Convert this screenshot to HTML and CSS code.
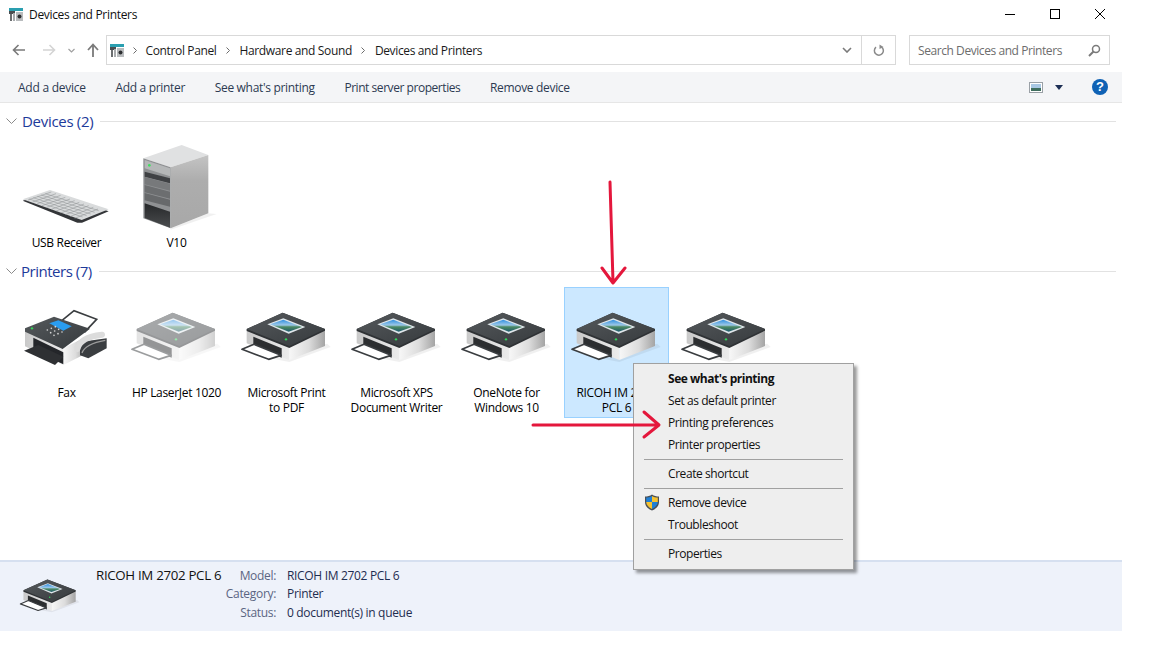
FILE: index.html
```html
<!DOCTYPE html>
<html lang="en">
<head>
<meta charset="utf-8">
<title>Devices and Printers</title>
<link rel="stylesheet" href="styles.css">
</head>
<body>
<svg class="defs" width="0" height="0" aria-hidden="true">
  <defs>
    <linearGradient id="sideR" x1="0" x2="1" y1="0" y2="0">
      <stop offset="0" stop-color="#f7f7f7"/><stop offset=".55" stop-color="#dcdcdc"/><stop offset="1" stop-color="#a4a4a4"/>
    </linearGradient>
    <linearGradient id="sideL" x1="0" x2="1" y1="0" y2="0">
      <stop offset="0" stop-color="#c9c9c9"/><stop offset="1" stop-color="#ececec"/>
    </linearGradient>
    <linearGradient id="topDark" x1="0" x2="1" y1="0" y2="1">
      <stop offset="0" stop-color="#55595c"/><stop offset="1" stop-color="#363a3d"/>
    </linearGradient>
    <linearGradient id="srvR" x1="0" x2="0" y1="0" y2="1">
      <stop offset="0" stop-color="#c4c4c4"/><stop offset=".35" stop-color="#adadad"/><stop offset="1" stop-color="#a8a8a8"/>
    </linearGradient>
    <linearGradient id="srvB" x1="0" x2="0" y1="0" y2="1">
      <stop offset="0" stop-color="#26282a"/><stop offset="1" stop-color="#4a4c4e"/>
    </linearGradient>
    <linearGradient id="photo" x1="0" x2="0" y1="0" y2="1">
      <stop offset="0" stop-color="#2f8fe0"/><stop offset=".45" stop-color="#9cc7e8"/><stop offset=".6" stop-color="#4c8a63"/><stop offset="1" stop-color="#1f5a6e"/>
    </linearGradient>
    <symbol id="printer" viewBox="0 0 315 294">
      <polygon points="60,205 166,225 290,180 280,170" fill="#000" opacity=".06"/>
      <polygon points="38,126 166,177 166,219 38,169" fill="url(#sideL)"/>
      <polygon points="166,177 273,126 273,177 166,219" fill="url(#sideR)"/>
      <polygon points="38,126 146,77 273,126 273,131 166,183 38,132" fill="#2f3235"/>
      <polygon points="38,126 146,77 273,126 166,177" fill="url(#topDark)"/>
      <polygon points="58,149 143,184 143,212 58,176" fill="#2c2e30"/>
      <polygon points="24,187 60,172 141,205 104,217" fill="#fff" stroke="#3a3d40" stroke-width="5" stroke-linejoin="round"/>
      <polygon points="100,112 148,94 214,120 164,140" fill="#dfe6ea"/>
      <polygon points="108,112 148,98 204,120 164,134" fill="url(#photo)"/>
      <circle cx="156" cy="157" r="3.500" fill="#35d45a"/>
    </symbol>
    <symbol id="fax" viewBox="0 0 315 294">
      <polygon points="136,107 180,71 248,97 213,134" fill="#fff" stroke="#3a3d40" stroke-width="5"/>
      <polygon points="33,126 148,184 148,234 33,178" fill="url(#sideL)"/>
      <polygon points="148,184 215,150 215,200 148,234" fill="url(#sideR)"/>
      <polygon points="198,165 278,154 278,184 223,214 198,205" fill="#3a3d40"/>
      <polygon points="33,124 120,89 228,125 146,186 33,134" fill="url(#topDark)"/>
      <polygon points="106,109 133,100 173,118 148,131" fill="#2a9df0"/>
      <g fill="#d8d8d8"><circle cx="100" cy="129" r="2.500"/><circle cx="112" cy="124" r="2.500"/><circle cx="124" cy="119" r="2.500"/><circle cx="110" cy="137" r="2.500"/><circle cx="122" cy="132" r="2.500"/><circle cx="134" cy="127" r="2.500"/><circle cx="120" cy="145" r="2.500"/><circle cx="132" cy="140" r="2.500"/><circle cx="144" cy="135" r="2.500"/></g>
      <circle cx="54" cy="124" r="3.500" fill="#35d45a"/>
      <polygon points="58,152 148,196 148,232 58,190" fill="#24262a"/>
      <polygon points="30,191 73,174 148,209 123,234" fill="#2e3033"/>
      <path d="M190 186 Q198 150 264 143" fill="none" stroke="#dcdcdc" stroke-width="18" stroke-linecap="round"/>
      <path d="M204 198 Q214 170 274 160" fill="none" stroke="#9c9c9c" stroke-width="4"/>
    </symbol>
    <symbol id="keyboard" viewBox="0 0 315 294">
      <polygon points="26,191 108,165 284,223 204,257 190,257" fill="#333538"/>
      <polygon points="26,187 108,159 284,217 203,249" fill="#d9dbdc"/>
      <g stroke="#8e9193" stroke-width="1.600" fill="none">
        <path d="M42 189 L112 165 M56 195 L126 170 M70 200 L140 175 M84 206 L154 181 M98 211 L168 186 M112 217 L182 191 M126 222 L196 196 M140 228 L210 201 M154 233 L224 206 M168 239 L238 211 M182 244 L252 216"/>
        <path d="M46 186 L206 240 M58 182 L218 236 M70 178 L230 231 M82 174 L242 226 M94 170 L254 221"/>
      </g>
    </symbol>
    <symbol id="server" viewBox="0 0 315 294">
      <polygon points="253,229 278,231 140,278 140,274" fill="#000" opacity=".06"/>
      <polygon points="58,64 173,24 253,54 140,91" fill="#e0e1e2"/>
      <polygon points="140,91 253,54 253,229 140,274" fill="url(#srvR)"/>
      <polygon points="58,64 140,91 140,274 58,244" fill="#8f9193"/>
      <polygon points="62,69 138,94 138,118 62,94" fill="#b5b7b8"/>
      <polygon points="62,104 138,124 138,139 62,119" fill="#3f4144"/>
      <polygon points="62,120 138,140 138,161 62,142" fill="#77797b"/>
      <polygon points="62,144 138,164 138,185 62,166" fill="#6c6e70"/>
      <polygon points="62,168 138,188 138,209 62,190" fill="#67696b"/>
      <polygon points="62,199 138,224 138,272 62,243" fill="url(#srvB)"/>
      <circle cx="76" cy="85" r="4" fill="#3fe05f"/>
    </symbol>
  </defs>
</svg>

<div class="window">
  <header class="titlebar">
    <svg class="app-icon" width="16" height="15" viewBox="0 0 16 15"><rect x="1" y="1" width="14" height="3" fill="#2a9fb0"/><rect x="1" y="4" width="6" height="3" fill="#4a4d50"/><rect x="2" y="7" width="2" height="7" fill="#6b6e70"/><rect x="5" y="6" width="2" height="8" fill="#a8abad"/><rect x="8" y="5" width="7" height="9" fill="#b9bcbe"/><circle cx="11.500" cy="9.500" r="2" fill="#2c2e30"/></svg>
    <span class="title">Devices and Printers</span>
    <div class="win-controls">
      <svg width="10" height="10" viewBox="0 0 10 10"><path d="M0 5.500H10" stroke="#000"/></svg>
      <svg width="10" height="10" viewBox="0 0 10 10"><rect x=".5" y=".5" width="9" height="9" fill="none" stroke="#000"/></svg>
      <svg width="10" height="10" viewBox="0 0 10 10"><path d="M0 0L10 10M10 0L0 10" stroke="#000" fill="none"/></svg>
    </div>
  </header>

  <nav class="navrow">
    <div class="nav-buttons">
      <svg class="nav-back" width="14" height="12" viewBox="0 0 14 12"><path d="M13 6H2M6.500 1L1.500 6L6.500 11" fill="none" stroke="#7a7a7a" stroke-width="1.600"/></svg>
      <svg class="nav-fwd" width="14" height="12" viewBox="0 0 14 12"><path d="M1 6H12M7.500 1L12.500 6L7.500 11" fill="none" stroke="#d4d4d4" stroke-width="1.600"/></svg>
      <svg class="nav-drop" width="7" height="5" viewBox="0 0 7 5"><path d="M.5 1L3.500 4L6.500 1" fill="none" stroke="#a0a0a0" stroke-width="1.200"/></svg>
      <svg class="nav-up" width="12" height="14" viewBox="0 0 12 14"><path d="M6 14V2M1 7L6 1.500L11 7" fill="none" stroke="#7a7a7a" stroke-width="1.800"/></svg>
    </div>
    <div class="addr">
      <svg class="app-icon" width="16" height="15" viewBox="0 0 16 15"><rect x="1" y="1" width="14" height="3" fill="#2a9fb0"/><rect x="1" y="4" width="6" height="3" fill="#4a4d50"/><rect x="2" y="7" width="2" height="7" fill="#6b6e70"/><rect x="5" y="6" width="2" height="8" fill="#a8abad"/><rect x="8" y="5" width="7" height="9" fill="#b9bcbe"/><circle cx="11.500" cy="9.500" r="2" fill="#2c2e30"/></svg>
      <div class="crumbs">
        <svg class="sep" width="4" height="7" viewBox="0 0 4 7"><path d="M.5 .5L3.500 3.500L.5 6.500" fill="none" stroke="#6a6a6a"/></svg>
        <span>Control Panel</span>
        <svg class="sep" width="4" height="7" viewBox="0 0 4 7"><path d="M.5 .5L3.500 3.500L.5 6.500" fill="none" stroke="#6a6a6a"/></svg>
        <span>Hardware and Sound</span>
        <svg class="sep" width="4" height="7" viewBox="0 0 4 7"><path d="M.5 .5L3.500 3.500L.5 6.500" fill="none" stroke="#6a6a6a"/></svg>
        <span>Devices and Printers</span>
      </div>
      <div class="addr-drop"><svg width="10" height="6" viewBox="0 0 10 6"><path d="M1 1L5 5L9 1" fill="none" stroke="#7a7a7a" stroke-width="1.600"/></svg></div>
      <div class="addr-refresh"><svg width="12" height="13" viewBox="0 0 12 13"><path d="M8.500 3A4.500 4.500 0 1 1 3 3.200" fill="none" stroke="#8a8a8a" stroke-width="1.500"/><path d="M6.500 0.500V5L10.500 3Z" fill="#8a8a8a"/></svg></div>
    </div>
    <div class="search">
      <span>Search Devices and Printers</span>
      <svg width="13" height="13" viewBox="0 0 13 13"><circle cx="8" cy="5" r="3.500" fill="none" stroke="#7a7a7a" stroke-width="1.500"/><path d="M5.500 7.500L1 12" stroke="#7a7a7a" stroke-width="2"/></svg>
    </div>
  </nav>

  <div class="toolbar">
    <span class="loose">Add a device</span>
    <span>Add a printer</span>
    <span>See what's printing</span>
    <span class="tight">Print server properties</span>
    <span>Remove device</span>
    <div class="toolbar-right">
      <svg width="14" height="11" viewBox="0 0 14 11"><rect x=".5" y=".5" width="13" height="10" fill="#fff" stroke="#9aa0a6"/><rect x="2" y="2" width="10" height="4" fill="#a9c8e4"/><rect x="2" y="6" width="10" height="3" fill="#3f6e5e"/></svg>
      <svg class="view-caret" width="8" height="5" viewBox="0 0 8 5"><path d="M0 0H8L4 5Z" fill="#1d2f55"/></svg>
      <span class="help">?</span>
    </div>
  </div>

  <main class="content">
    <section class="group group-devices">
      <h2 class="group-head">
        <svg width="11" height="6" viewBox="0 0 11 6"><path d="M.5 .5L5.500 5.500L10.500 .5" fill="none" stroke="#8a8a8a"/></svg>
        <span class="gh-devices">Devices (2)</span><i class="rule"></i>
      </h2>
      <div class="items">
        <div class="item"><svg class="ico" viewBox="0 0 315 294"><use href="#keyboard"/></svg><span class="label">USB Receiver</span></div>
        <div class="item"><svg class="ico" viewBox="0 0 315 294"><use href="#server"/></svg><span class="label">V10</span></div>
      </div>
    </section>
    <section class="group">
      <h2 class="group-head">
        <svg width="11" height="6" viewBox="0 0 11 6"><path d="M.5 .5L5.500 5.500L10.500 .5" fill="none" stroke="#8a8a8a"/></svg>
        <span class="gh-printers">Printers (7)</span><i class="rule"></i>
      </h2>
      <div class="items">
        <div class="item"><svg class="ico" viewBox="0 0 315 294"><use href="#fax"/></svg><span class="label">Fax</span></div>
        <div class="item"><svg class="ico dim" viewBox="0 0 315 294"><use href="#printer"/></svg><span class="label">HP LaserJet 1020</span></div>
        <div class="item"><svg class="ico" viewBox="0 0 315 294"><use href="#printer"/></svg><span class="label">Microsoft Print<br>to PDF</span></div>
        <div class="item"><svg class="ico" viewBox="0 0 315 294"><use href="#printer"/></svg><span class="label">Microsoft XPS<br>Document Writer</span></div>
        <div class="item"><svg class="ico" viewBox="0 0 315 294"><use href="#printer"/></svg><span class="label">OneNote for<br>Windows 10</span></div>
        <div class="item selected"><svg class="ico" viewBox="0 0 315 294"><use href="#printer"/></svg><span class="label">RICOH IM 2702<br>PCL 6</span></div>
        <div class="item"><svg class="ico" viewBox="0 0 315 294"><use href="#printer"/></svg></div>
      </div>
    </section>
  </main>

  <footer class="details">
    <svg class="details-ico" viewBox="0 0 315 294"><use href="#printer"/></svg>
    <div class="details-grid">
      <span class="d-name">RICOH IM 2702 PCL 6</span><span class="d-key">Model:</span><span class="d-val">RICOH IM 2702 PCL 6</span>
      <span></span><span class="d-key">Category:</span><span class="d-val">Printer</span>
      <span></span><span class="d-key">Status:</span><span class="d-val">0 document(s) in queue</span>
    </div>
  </footer>
</div>

<div class="menu">
  <div class="mi strong">See what's printing</div>
  <div class="mi">Set as default printer</div>
  <div class="mi">Printing preferences</div>
  <div class="mi">Printer properties</div>
  <hr>
  <div class="mi">Create shortcut</div>
  <hr>
  <div class="mi shielded">
    <svg class="shield" width="16" height="17" viewBox="0 0 16 17"><path d="M8 .5C10 2 12.500 2.500 15 2.500V8C15 12 12 15 8 16.500C4 15 1 12 1 8V2.500C3.500 2.500 6 2 8 .5Z" fill="#4a4f55"/><path d="M8 2V8H2.200V3.600C4.200 3.500 6.300 3 8 2Z" fill="#1f7fd6"/><path d="M8 8H13.800C13.600 11 11.300 13.600 8 15Z" fill="#1f7fd6"/><path d="M8 2C9.700 3 11.800 3.500 13.800 3.600V8H8Z" fill="#f5c230"/><path d="M8 8V15C4.700 13.600 2.400 11 2.200 8Z" fill="#f5c230"/></svg>
    Remove device</div>
  <div class="mi">Troubleshoot</div>
  <hr>
  <div class="mi">Properties</div>
</div>

<svg class="annot" width="1152" height="648" viewBox="0 0 1152 648" aria-hidden="true">
  <g fill="none" stroke="#e4173c" stroke-width="3" stroke-linecap="round" stroke-linejoin="round">
    <path d="M610 182L613 282M602 268L613 283L625 268"/>
    <path d="M533 425L658 425M644 412L659 425L644 437"/>
  </g>
</svg>
</body>
</html>
```

FILE: styles.css
```css
* { box-sizing: border-box; }
html, body { margin: 0; padding: 0; background: #fff; }
body {
  position: relative;
  width: 1152px;
  height: 648px;
  overflow: hidden;
  font-family: "Open Sans", "Noto Sans", sans-serif;
  font-size: 12px;
  letter-spacing: -0.32px;
  color: #000;
}
.defs { position: absolute; }
.window { width: 1122px; height: 631px; display: flex; flex-direction: column; }

.titlebar { height: 35px; flex: none; display: flex; align-items: center; padding: 0 0 7px 8px; }
.title { margin-left: 5px; color: #111; }
.win-controls { margin-left: auto; display: flex; gap: 35px; padding-right: 17px; }

.navrow { height: 30px; flex: none; display: flex; padding-right: 12px; }
.nav-buttons { width: 106px; flex: none; display: flex; align-items: center; padding-left: 12px; }
.nav-fwd { margin-left: 16px; }
.nav-drop { margin-left: 12px; }
.nav-up { margin-left: 12px; }
.addr { width: 790px; flex: none; display: flex; align-items: center; border: 1px solid #d9d9d9; padding-left: 2px; }
.crumbs { display: flex; align-items: center; flex: 1; margin-left: 8px; color: #1a1a1a; letter-spacing: -0.36px; }
.crumbs span { margin: 0 9.500px; }
.crumbs .sep:first-child { margin-right: -1px; }
.addr-drop { width: 29px; align-self: stretch; display: flex; align-items: center; justify-content: center; }
.addr-refresh { width: 34px; align-self: stretch; display: flex; align-items: center; justify-content: center; border-left: 1px solid #d9d9d9; }
.search { width: 201px; margin-left: 13px; flex: none; display: flex; align-items: center; justify-content: space-between; border: 1px solid #d9d9d9; padding: 0 8px; color: #6d6d6d; letter-spacing: -0.43px; }

.toolbar { height: 31px; margin-top: 7px; flex: none; display: flex; align-items: center; gap: 29.700px; padding: 0 14px 0 18px; background: #f4f5f7; border-bottom: 1px solid #e6e6e6; color: #2c3a52; }
.loose { letter-spacing: -0.25px; }
.tight { letter-spacing: -0.45px; }
.toolbar-right { margin-left: auto; display: flex; align-items: center; }
.view-caret { margin-left: 12px; }
.help { width: 16px; height: 16px; margin-left: 29px; border-radius: 50%; background: #0f62b5; color: #fff; font: bold 13px/16px "Liberation Sans", sans-serif; letter-spacing: 0; text-align: center; }

.content { flex: 1; padding: 8px 6px 0 6px; display: flex; flex-direction: column; }
.group-devices { height: 150px; flex: none; }
.group-head { height: 20px; margin: 0; display: flex; align-items: center; font-weight: 400; font-size: 15px; letter-spacing: -0.300px; color: #1d3a9a; }
.gh-devices { margin-left: 5px; }
.gh-printers { margin-left: 4px; letter-spacing: -0.480px; }
.rule { flex: 1; height: 1px; margin-left: 7px; background: #e2e2e2; }
.items { display: flex; gap: 5px; margin-top: 6px; padding-left: 8px; }
.item { width: 105px; min-height: 125px; display: flex; flex-direction: column; align-items: center; border: 1px solid transparent; text-align: center; }
.ico { width: 105px; height: 98px; flex: none; margin: -1px -1px 0; overflow: visible; }
.dim { opacity: .5; }
.label { display: block; line-height: 15px; white-space: nowrap; }
.selected { background: #cce8ff; border-color: #99d1ff; height: 131px; }

.details { height: 71px; flex: none; display: flex; padding-left: 15px; background: #eef2fa; border-top: 2px solid #d6e0f0; }
.details-ico { width: 70px; height: 66px; flex: none; }
.details-grid { margin-left: 11px; padding-top: 4px; display: grid; grid-template-columns: 125px 55px 1fr; grid-auto-rows: 18.500px; align-items: center; }
.d-name { color: #111; font-size: 13.300px; white-space: nowrap; }
.d-key { text-align: right; color: #5b6582; }
.d-val { padding-left: 11px; color: #1f2d50; }

.menu { position: absolute; left: 633px; top: 363px; width: 221px; height: 207px; padding: 4px 1px 3px; background: #eee; border: 1px solid #a0a0a0; box-shadow: 3px 3px 3px rgba(0,0,0,.4); letter-spacing: -0.43px; }
.mi { position: relative; height: 22px; line-height: 22px; padding-left: 33px; color: #111; }
.strong { font-weight: 700; letter-spacing: -0.470px; }
.menu hr { height: 1px; margin: 3px 9px; border: 0; background: #a0a0a0; }
.shield { position: absolute; left: 9px; top: 2px; }

.annot { position: absolute; left: 0; top: 0; pointer-events: none; }
```
